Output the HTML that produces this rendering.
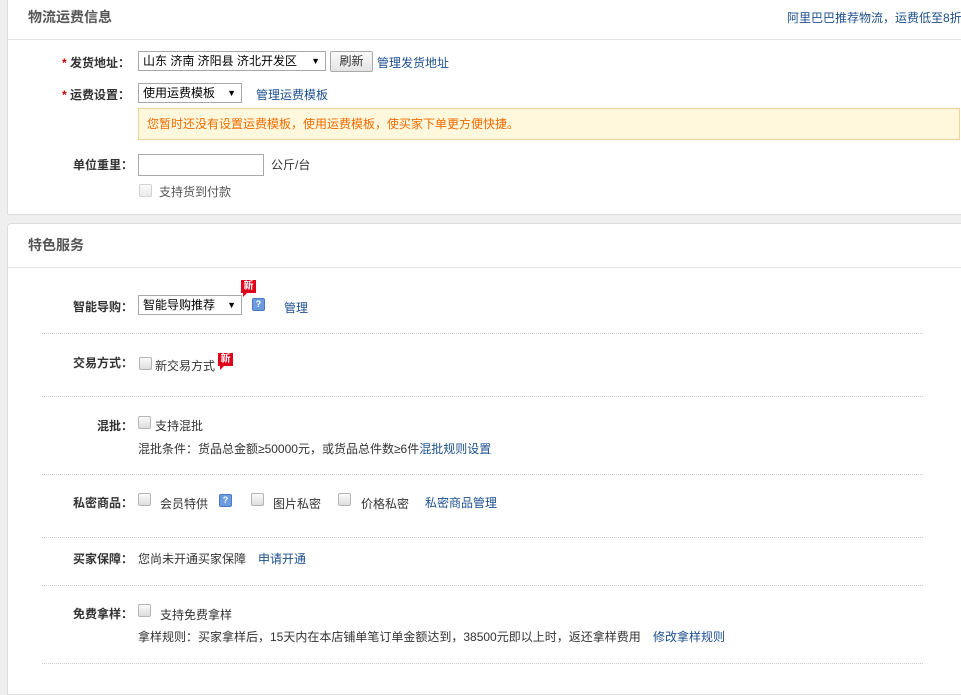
<!DOCTYPE html>
<html><head><meta charset="utf-8"><style>
body{margin:0;width:961px;height:680px;background:#efefef;font-family:"Liberation Sans","Noto Sans CJK SC",sans-serif;font-size:12px;color:#333;position:relative;overflow:hidden}
.p{position:absolute;background:#fff;border:1px solid #ddd;border-right:none}
.a{position:absolute;white-space:nowrap}
.t{font-size:14px;font-weight:bold;color:#555}
.hl{position:absolute;left:8px;right:0;height:1px;background:#e3e3e3}
.l{font-weight:bold;color:#333}
.r{color:#c00}
.lk{color:#1c4f8c}
.sel{position:absolute;height:20px;border:1px solid #a8a8a8;background:#fff;box-sizing:border-box;font-size:12px;line-height:18px;padding-left:4px;color:#000}
.sel:after{content:"▼";position:absolute;right:5px;top:0;font-size:9px}
.cb{position:absolute;width:11px;height:11px;border:1px solid #b5b5b5;border-radius:2px;background:linear-gradient(#fafafa,#ddd)}
.dl{position:absolute;left:42px;width:881px;border-top:1px dotted #ccc;height:0}
.new{position:absolute;width:15px;height:13px;background:#e0001b;color:#fff;font-size:10px;line-height:13px;text-align:center;font-weight:bold}
.new:after{content:"";position:absolute;left:2px;bottom:-4px;border-left:4px solid #e0001b;border-bottom:4px solid transparent}
.q{position:absolute;width:11px;height:11px;background:#6b9be0;border:1px solid #4d78bd;border-radius:2px;color:#fff;font-size:9px;font-weight:bold;line-height:11px;text-align:center}
</style></head><body>
<div class="p" style="left:7px;top:-2px;width:960px;height:215px">
<div class="hl" style="top:40px;left:0"></div>
</div>
<div class="a t" style="left:28px;top:7px">物流运费信息</div>
<div class="a lk" style="left:787px;top:9px">阿里巴巴推荐物流，运费低至8折</div>
<div class="a l" style="left:62px;top:54px"><span class="r">*</span> 发货地址：</div>
<div class="sel" style="left:138px;top:51px;width:188px">山东 济南 济阳县 济北开发区</div>
<div class="a" style="left:330px;top:51px;width:43px;height:21px;border:1px solid #aaa;border-radius:2px;background:linear-gradient(#fafafa,#e4e4e4);box-sizing:border-box;text-align:center;line-height:19px">刷新</div>
<div class="a lk" style="left:377px;top:54px">管理发货地址</div>
<div class="a l" style="left:62px;top:86px"><span class="r">*</span> 运费设置：</div>
<div class="sel" style="left:138px;top:83px;width:104px">使用运费模板</div>
<div class="a lk" style="left:256px;top:86px">管理运费模板</div>
<div class="a" style="left:138px;top:108px;width:822px;height:32px;background:#fff8dc;border:1px solid #ecd49a;box-sizing:border-box;color:#f26b00;line-height:30px;padding-left:8px">您暂时还没有设置运费模板，使用运费模板，使买家下单更方便快捷。</div>
<div class="a l" style="left:73px;top:156px">单位重里：</div>
<div class="a" style="left:138px;top:154px;width:126px;height:22px;border:1px solid #aaa;box-sizing:border-box"></div>
<div class="a" style="left:271px;top:156px">公斤/台</div>
<div class="cb" style="left:139px;top:184px;opacity:.6"></div>
<div class="a" style="left:159px;top:183px;color:#555">支持货到付款</div>

<div class="p" style="left:7px;top:223px;width:960px;height:470px;border-radius:4px 0 0 0">
<div class="hl" style="top:43px;left:0"></div>
</div>
<div class="a t" style="left:28px;top:235px">特色服务</div>
<div class="a l" style="left:73px;top:298px">智能导购：</div>
<div class="sel" style="left:138px;top:295px;width:104px">智能导购推荐</div>
<div class="new" style="left:241px;top:280px">新</div>
<div class="q" style="left:252px;top:298px">?</div>
<div class="a lk" style="left:284px;top:299px">管理</div>
<div class="dl" style="top:333px"></div>
<div class="a l" style="left:73px;top:354px">交易方式：</div>
<div class="cb" style="left:139px;top:357px"></div>
<div class="a" style="left:155px;top:357px">新交易方式</div>
<div class="new" style="left:218px;top:353px">新</div>
<div class="dl" style="top:396px"></div>
<div class="a l" style="left:97px;top:417px">混批：</div>
<div class="cb" style="left:138px;top:416px"></div>
<div class="a" style="left:155px;top:417px">支持混批</div>
<div class="a" style="left:138px;top:440px">混批条件：货品总金额≥50000元，或货品总件数≥6件<span class="lk">混批规则设置</span></div>
<div class="dl" style="top:474px"></div>
<div class="a l" style="left:73px;top:494px">私密商品：</div>
<div class="cb" style="left:138px;top:493px"></div>
<div class="a" style="left:160px;top:495px">会员特供</div>
<div class="q" style="left:219px;top:494px">?</div>
<div class="cb" style="left:251px;top:493px"></div>
<div class="a" style="left:273px;top:495px">图片私密</div>
<div class="cb" style="left:338px;top:493px"></div>
<div class="a" style="left:361px;top:495px">价格私密</div>
<div class="a lk" style="left:425px;top:494px">私密商品管理</div>
<div class="dl" style="top:537px"></div>
<div class="a l" style="left:73px;top:550px">买家保障：</div>
<div class="a" style="left:138px;top:550px">您尚未开通买家保障</div>
<div class="a lk" style="left:258px;top:550px">申请开通</div>
<div class="dl" style="top:585px"></div>
<div class="a l" style="left:73px;top:605px">免费拿样：</div>
<div class="cb" style="left:138px;top:604px"></div>
<div class="a" style="left:160px;top:606px">支持免费拿样</div>
<div class="a" style="left:138px;top:628px">拿样规则：买家拿样后，15天内在本店铺单笔订单金额达到，38500元即以上时，返还拿样费用</div>
<div class="a lk" style="left:653px;top:628px">修改拿样规则</div>
<div class="dl" style="top:663px"></div>
</body></html>
